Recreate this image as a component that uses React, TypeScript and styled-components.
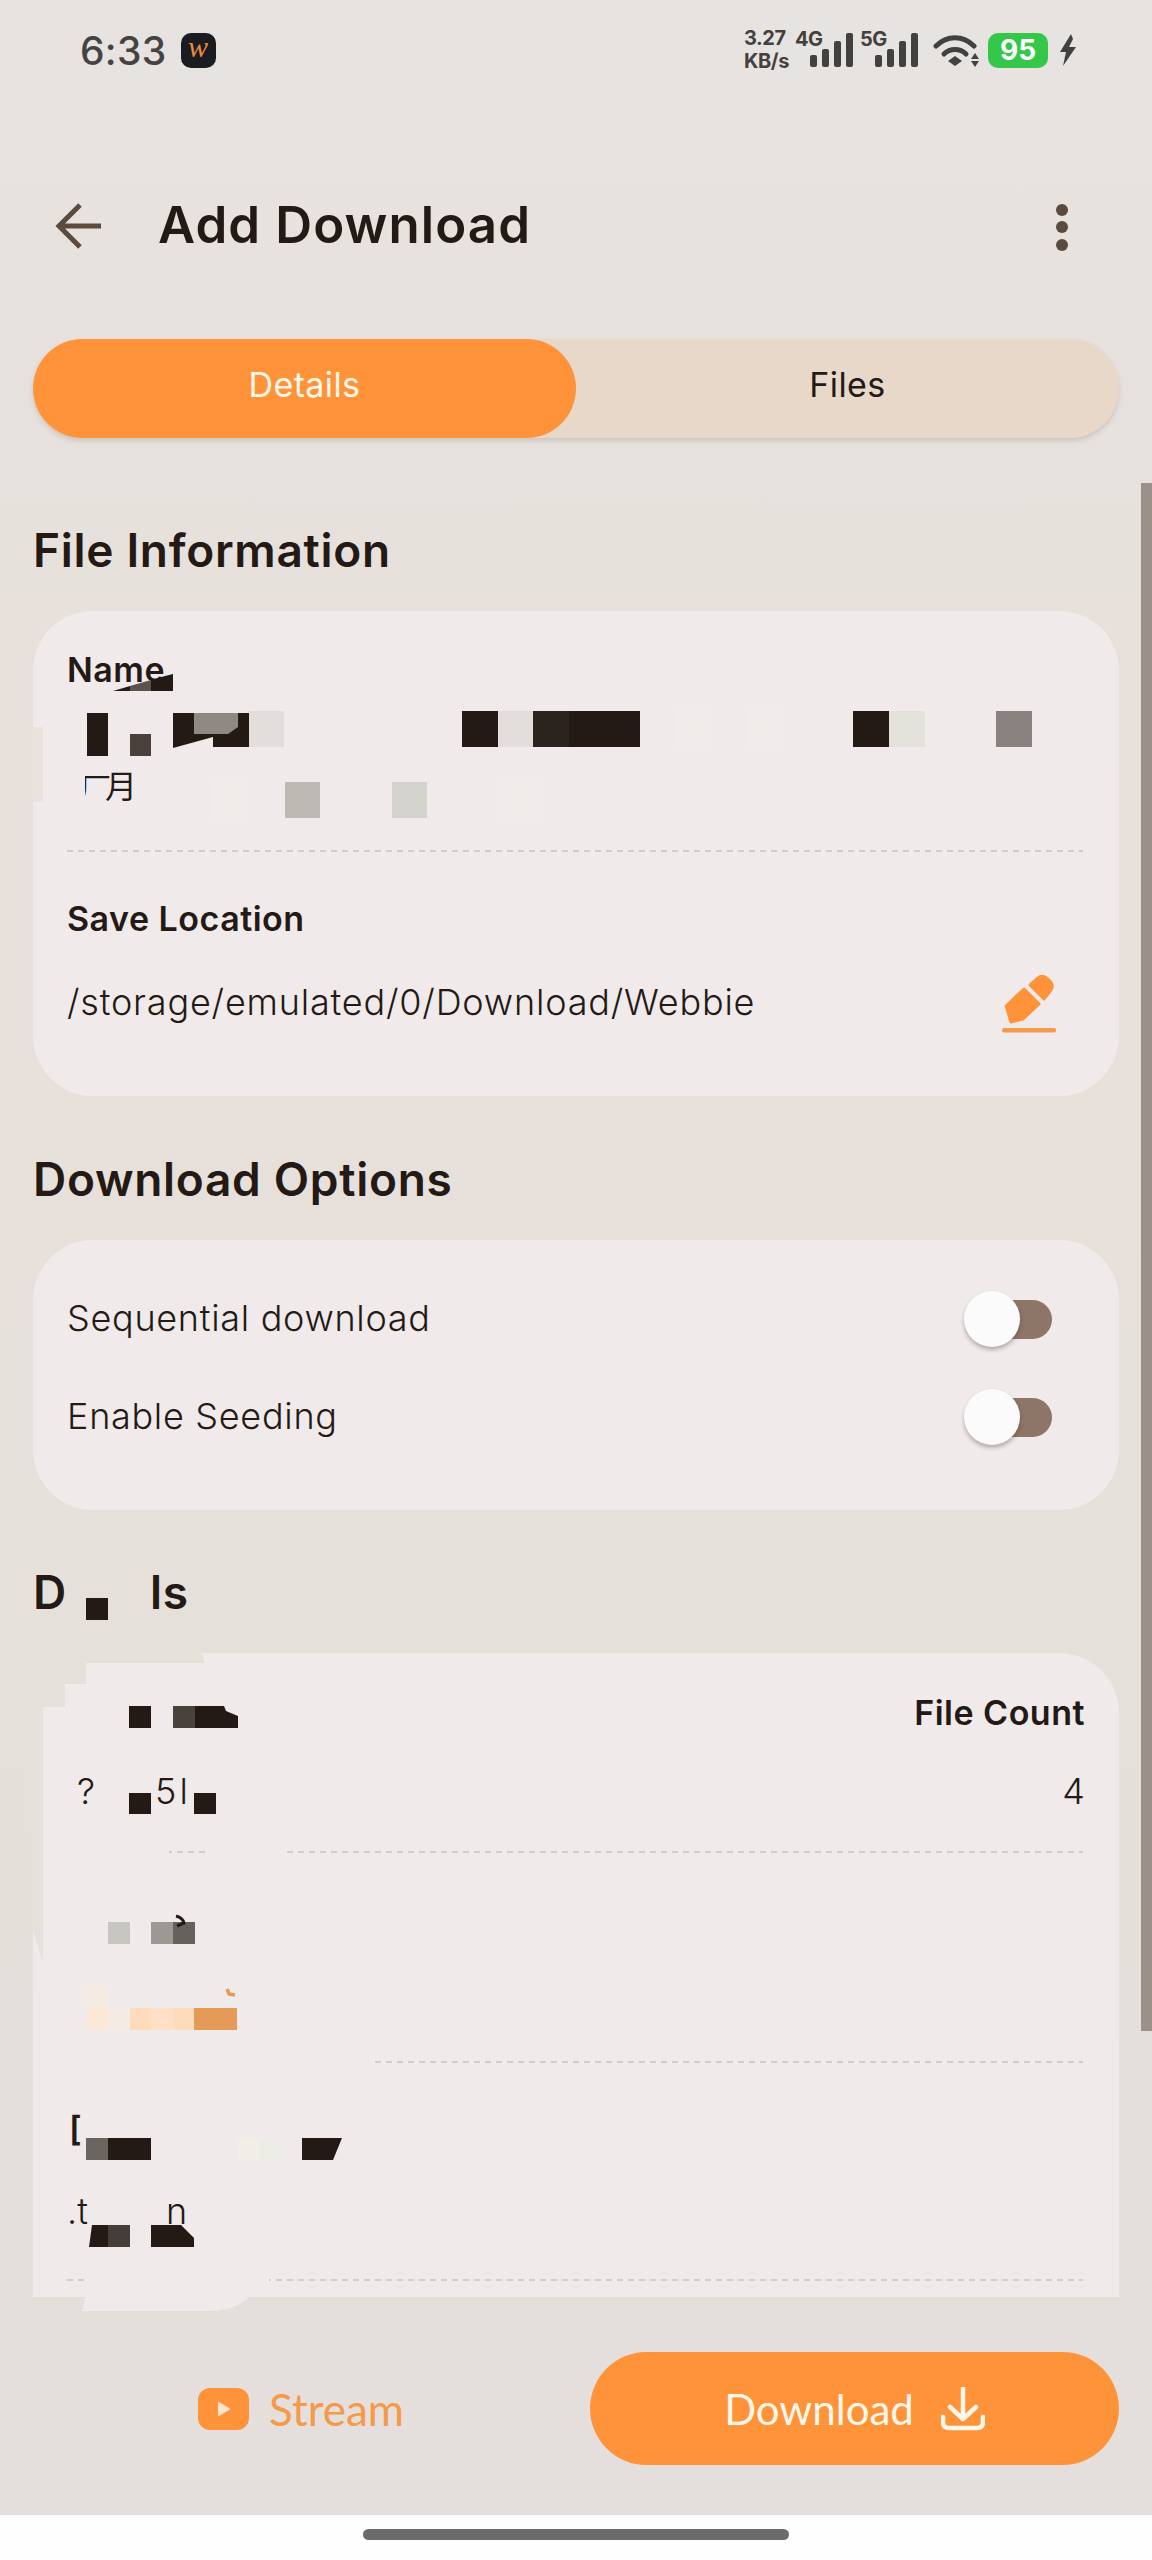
import React from "react";
import styled, { createGlobalStyle } from "styled-components";

const INK = "#231a15";
const ORANGE = "#ff9339";
const CARD = "#f0ebea";
const BROWN = "#5b4a3e";
const FONT = `Inter, "Noto Sans CJK SC", sans-serif`;

const Global = createGlobalStyle`
  html, body { margin: 0; padding: 0; background: #fff; }
  * { box-sizing: border-box; }
`;

const Page = styled.div`
  position: relative;
  width: 1152px;
  height: 2560px;
  overflow: hidden;
  display: flex;
  flex-direction: column;
  font-family: ${FONT};
  color: ${INK};
  background: linear-gradient(180deg, #e7e3e0 0%, #e7e0db 30%, #e6e0da 60%, #e4dfdc 100%);
`;

const StatusBar = styled.div`
  height: 100px;
  flex: none;
  padding: 0 76px 0 80px;
  display: flex;
  align-items: center;
  justify-content: space-between;
`;
const StatusLeft = styled.div`
  display: flex;
  align-items: center;
  gap: 14px;
`;
const Clock = styled.span`
  font-size: 39px;
  font-weight: 500;
  letter-spacing: 0.3px;
  color: #454341;
`;
const AppIcon = styled.div`
  width: 35px;
  height: 35px;
  border-radius: 10px;
  background: #1b1c22;
  display: flex;
  align-items: center;
  justify-content: center;
  font-family: "Liberation Serif", serif;
  font-style: italic;
  font-size: 30px;
  line-height: 1;
  color: #e98b3c;
  padding-bottom: 6px;
`;
const StatusRight = styled.div`
  display: flex;
  align-items: center;
  color: #434140;
`;
const Speed = styled.div`
  font-size: 20px;
  font-weight: 700;
  line-height: 23px;
  width: 51px;
  letter-spacing: -0.4px;
  white-space: nowrap;
`;
const Signal = styled.div`
  display: flex;
  align-items: flex-start;
  height: 34px;
  width: 65px;
  position: relative;
`;
const NetLabel = styled.span`
  font-size: 20px;
  font-weight: 700;
  line-height: 20px;
  letter-spacing: -0.5px;
  width: 30px;
  margin-top: -4px;
`;
const Battery = styled.div`
  width: 60px;
  height: 35px;
  margin-left: 9px;
  border-radius: 10px;
  background: #34c749;
  color: #fff;
  font-size: 28px;
  font-weight: 700;
  display: flex;
  align-items: center;
  justify-content: center;
`;

const AppBar = styled.header`
  height: 100px;
  flex: none;
  margin-top: 76px;
  padding: 0 83px 0 55px;
  display: flex;
  align-items: center;
`;
const Title = styled.h1`
  margin: -3px 0 0 53px;
  flex: 1;
  font-size: 51px;
  font-weight: 600;
  letter-spacing: 1.1px;
`;
const KebabSlot = styled.div`
  display: flex;
  margin-top: 4px;
`;

const Tabs = styled.div`
  flex: none;
  margin: 63px 33px 0;
  height: 99px;
  border-radius: 50px;
  background: #e8d8ca;
  box-shadow: 0 3px 5px rgba(90, 70, 50, 0.18);
  display: grid;
  grid-template-columns: 543px 1fr;
`;
const Tab = styled.div<{ $active?: boolean }>`
  display: flex;
  align-items: center;
  justify-content: center;
  padding-bottom: 8px;
  border-radius: 50px;
  font-size: 34px;
  letter-spacing: 0.4px;
  font-weight: 400;
  background: ${(p) => (p.$active ? ORANGE : "transparent")};
  color: ${(p) => (p.$active ? "#fff7ea" : INK)};
`;

const Scroll = styled.main`
  flex: none;
  height: 1859px;
  overflow: hidden;
  padding: 0 33px;
`;
const SectionTitle = styled.h2<{ $top: number }>`
  margin: ${(p) => p.$top}px 0 30px;
  height: 60px;
  line-height: 58px;
  font-size: 46px;
  font-weight: 600;
  letter-spacing: 0.7px;
`;
const Card = styled.section`
  background: ${CARD};
  border-radius: 60px;
  padding: 0 34px;
`;
const InfoCard = styled(Card)`
  padding-top: 37px;
  padding-bottom: 63px;
`;
const OptionsCard = styled(Card)`
  padding-top: 30px;
  padding-bottom: 44px;
  padding-right: 67px;
`;
const DetailsCard = styled(Card)`
  padding-top: 38px;
  height: 900px;
`;
const Label = styled.div<{ $top?: number }>`
  height: 44px;
  line-height: 44px;
  margin-top: ${(p) => p.$top ?? 0}px;
  font-size: 34px;
  font-weight: 600;
  letter-spacing: 0.5px;
`;
const NameValue = styled.div`
  margin-top: 13px;
  height: 106px;
  padding: 53px 0 0 12px;
  font-size: 32px;
  line-height: 53px;
  letter-spacing: -6px;
  font-family: "Noto Sans CJK SC", sans-serif;
`;
const Divider = styled.div<{ $top: number }>`
  height: 2px;
  margin: ${(p) => p.$top}px 2px 0 0;
  background: repeating-linear-gradient(90deg, #d3ccc7 0 6px, transparent 6px 11px);
`;
const PathRow = styled.div`
  margin-top: 32px;
  height: 60px;
  display: flex;
  align-items: center;
  justify-content: space-between;
  padding-right: 25px;
`;
const PathText = styled.span`
  font-size: 36px;
  letter-spacing: 0.8px;
  font-weight: 300;
  margin-top: -3px;
`;
const OptionRow = styled.div`
  height: 98px;
  display: flex;
  align-items: center;
  justify-content: space-between;
`;
const OptionText = styled.span`
  font-size: 36px;
  font-weight: 300;
  letter-spacing: 0.7px;
  margin-top: -2px;
`;
const Switch = styled.div`
  position: relative;
  width: 88px;
  height: 39px;
`;
const SwitchTrack = styled.div`
  margin-left: 20px;
  height: 39px;
  border-radius: 0 20px 20px 0;
  background: #8d7568;
`;
const SwitchThumb = styled.div`
  position: absolute;
  left: 0;
  top: -9px;
  width: 56px;
  height: 56px;
  border-radius: 50%;
  background: #fbfbfb;
  box-shadow: 0 3px 4px rgba(60, 40, 30, 0.32);
`;
const InfoRow = styled.div`
  display: flex;
  justify-content: space-between;
`;
const ValueRow = styled.div<{ $top: number }>`
  display: flex;
  justify-content: space-between;
  align-items: center;
  height: 50px;
  margin-top: ${(p) => p.$top}px;
  font-size: 36px;
  font-weight: 300;
`;
const Frag = styled.span<{ $left: number; $strong?: boolean }>`
  margin-left: ${(p) => p.$left}px;
  font-weight: ${(p) => (p.$strong ? 600 : 300)};
  white-space: pre;
`;
const Frags = styled.div`
  display: flex;
  align-items: center;
`;

const Footer = styled.footer`
  flex: none;
  height: 218px;
  padding: 55px 33px 0 198px;
  display: flex;
  align-items: flex-start;
  justify-content: space-between;
`;
const StreamButton = styled.div`
  height: 113px;
  display: flex;
  align-items: center;
  gap: 20px;
  font-family: Lato, sans-serif;
  font-size: 44px;
  color: #f49a4a;
`;
const StreamIcon = styled.div`
  width: 51px;
  height: 42px;
  border-radius: 12px;
  background: ${ORANGE};
  display: flex;
  align-items: center;
  justify-content: center;
`;
const DownloadButton = styled.div`
  width: 529px;
  height: 113px;
  border-radius: 57px;
  background: ${ORANGE};
  color: #fff7ea;
  display: flex;
  align-items: center;
  justify-content: center;
  gap: 27px;
  font-family: Lato, sans-serif;
  font-size: 42px;
`;
const NavBar = styled.div`
  flex: 1;
  background: #fefefe;
  display: flex;
  justify-content: center;
  padding-top: 14px;
`;
const NavPill = styled.div`
  width: 426px;
  height: 11px;
  border-radius: 6px;
  background: #6b6b6b;
`;
const ScrollThumb = styled.div`
  position: absolute;
  right: 0;
  top: 483px;
  width: 11px;
  height: 1548px;
  background: #9b918a;
`;
const RedactionLayer = styled.svg`
  position: absolute;
  left: 0;
  top: 0;
  pointer-events: none;
`;

const Bars = () => (
  <svg width="44" height="34" viewBox="0 0 44 34" style={{ marginLeft: -15 }}>
    <g fill="#434140">
      <rect x="0" y="22" width="7" height="12" rx="2" />
      <rect x="12" y="16" width="7" height="18" rx="2" />
      <rect x="24" y="8" width="7" height="26" rx="2" />
      <rect x="36" y="0" width="7" height="34" rx="2" />
    </g>
  </svg>
);

const Wifi = () => (
  <svg width="46" height="33" viewBox="0 0 46 33" style={{ marginLeft: 8 }}>
    <g fill="none" stroke="#434140" strokeWidth="5" strokeLinecap="round">
      <path d="M3 12C14 1 30 1 41 12" />
      <path d="M11 20C17 14 27 14 33 20" />
    </g>
    <path d="M15 27L22 22L29 27L22 32Z" fill="#434140" />
    <path d="M42 19L46 25H38ZM42 33L38 27H46Z" fill="#434140" />
  </svg>
);

const Bolt = () => (
  <svg width="16" height="32" viewBox="0 0 16 32" style={{ marginLeft: 12 }}>
    <path d="M11 0L0 18H6L3 32L16 13H9L13 5Z" fill="#434140" />
  </svg>
);

const BackArrow = () => (
  <svg width="50" height="50" viewBox="0 0 50 50">
    <path d="M3 25H46M25 4L4 25L25 46" fill="none" stroke={BROWN} strokeWidth="5" />
  </svg>
);

const Kebab = () => (
  <svg width="14" height="48" viewBox="0 0 14 48">
    <g fill={BROWN}>
      <circle cx="7" cy="6" r="6" />
      <circle cx="7" cy="23" r="6" />
      <circle cx="7" cy="41" r="6" />
    </g>
  </svg>
);

const Pen = () => (
  <svg width="60" height="60" viewBox="0 0 60 60">
    <g fill={ORANGE} stroke={ORANGE} strokeLinejoin="round" strokeWidth="3">
      <path d="M6 33L24 16L39 31L23 46L11 49Z" />
      <path d="M30 12L38 5Q41 2 45 4L50 8Q54 13 51 17L44 26Z" />
    </g>
    <rect x="2" y="55" width="54" height="4.5" rx="2" fill="#f59a4c" />
  </svg>
);

const PlayGlyph = () => (
  <svg width="14" height="16" viewBox="0 0 14 16">
    <path d="M2 2L12 8L2 14Z" fill="#fbe3cd" stroke="#fbe3cd" strokeWidth="2" strokeLinejoin="round" />
  </svg>
);

const DownloadGlyph = () => (
  <svg width="44" height="44" viewBox="0 0 44 44">
    <path
      d="M22 1V31M9 20L22 32L35 20M2 30V35Q2 41 8 41H36Q42 41 42 35V30"
      fill="none"
      stroke="#fff7ea"
      strokeWidth="4.5"
      strokeLinecap="round"
      strokeLinejoin="round"
    />
  </svg>
);

const DARK = "#231a15";
const FAINT = "#f0ecea";
const cells: [number, number, number, number, string][] = [
  // name, line one
  [87, 713, 21, 43, DARK],
  [130, 734, 21, 22, "#4a403c"],
  [249, 711, 35, 36, "#e3dedc"],
  [462, 711, 36, 36, DARK],
  [498, 711, 35, 36, "#e3dedc"],
  [533, 711, 36, 36, "#2a231e"],
  [569, 711, 71, 36, DARK],
  [676, 711, 36, 36, FAINT],
  [748, 711, 30, 36, FAINT],
  [853, 711, 36, 36, DARK],
  [889, 711, 36, 36, "#e2e1da"],
  [996, 711, 36, 36, "#8a827f"],
  // name, line two
  [212, 782, 36, 36, FAINT],
  [285, 782, 35, 36, "#bdbab4"],
  [392, 782, 35, 36, "#d4d2cd"],
  [501, 782, 36, 36, FAINT],
  // details heading
  [86, 1598, 22, 22, DARK],
  // details, first row
  [129, 1706, 22, 22, DARK],
  [173, 1706, 22, 22, "#47423c"],
  [129, 1793, 22, 21, DARK],
  [194, 1793, 22, 21, DARK],
  // details, second row
  [108, 1922, 22, 22, "#c8c6c1"],
  [151, 1922, 22, 22, "#9c9894"],
  [173, 1922, 22, 22, "#65615b"],
  [87, 1987, 21, 21, "#f5ebe3"],
  [87, 2008, 21, 22, "#fde8d8"],
  [108, 2008, 22, 22, "#f4ebe4"],
  [130, 2008, 21, 22, "#fedcbb"],
  [151, 2008, 22, 22, "#fee0c6"],
  [173, 2008, 21, 22, "#fedcbb"],
  [194, 2008, 43, 22, "#e69a57"],
  // details, third row
  [86, 2138, 22, 22, "#6b655f"],
  [108, 2138, 43, 22, DARK],
  [238, 2138, 22, 22, "#f1eee8"],
  [260, 2138, 22, 22, "#ecebe6"],
  [108, 2225, 22, 22, "#443d38"],
];
const polys: [string, string][] = [
  // name label
  ["113,691 130,691 130,686", DARK],
  ["130,691 151,691 151,680 130,686", "#5b524e"],
  ["151,691 173,691 173,674 165,676 151,680", DARK],
  // name, line one
  ["173,713 249,713 249,747 213,747 213,737 173,748", DARK],
  ["194,713 238,713 238,727 228,734 194,734", "#8f8985"],
  // details
  ["195,1706 224,1706 226,1711 238,1716 238,1728 195,1728", DARK],
  ["302,2138 342,2138 333,2160 302,2160", DARK],
  ["92,2225 108,2225 108,2247 89,2247", DARK],
  ["151,2225 181,2225 194,2238 194,2247 151,2247", DARK],
];

const Redactions = () => (
  <RedactionLayer width="1152" height="2560" viewBox="0 0 1152 2560">
    {/* background showing through the top-left of the details card */}
    <path
      d="M30 1650H200L205 1663H86V1684H65V1707H43V1963L33 1930V1990H30Z"
      fill="#e6e0db"
    />
    {/* card colour spilling past the clipped list */}
    <path d="M86 2296H250Q235 2311 210 2311H82Z" fill={CARD} />
    {/* patches over the partly hidden text and the dashed rules */}
    <rect x="33" y="727" width="10" height="75" fill="#e9e2dd" />
    <rect x="66" y="760" width="19" height="44" fill={CARD} />
    <rect x="85" y="760" width="23" height="16" fill={CARD} />
    <rect x="66" y="1850" width="103" height="5" fill={CARD} />
    <rect x="208" y="1850" width="75" height="5" fill={CARD} />
    <rect x="66" y="2060" width="304" height="5" fill={CARD} />
    <rect x="85" y="2278" width="184" height="5" fill={CARD} />
    {cells.map(([x, y, w, h, c]) => (
      <rect key={`${x}-${y}`} x={x} y={y} width={w} height={h} fill={c} shapeRendering="crispEdges" />
    ))}
    {polys.map(([p, c]) => (
      <polygon key={p} points={p} fill={c} />
    ))}
    <path d="M176 1916Q183 1918 184 1923L177 1926" fill="none" stroke={DARK} strokeWidth="3" />
    <path d="M227 1989L229 1994L235 1995" fill="none" stroke="#e69a57" strokeWidth="3.5" />
  </RedactionLayer>
);

export default function App() {
  return (
    <Page>
      <Global />
      <StatusBar>
        <StatusLeft>
          <Clock>6:33</Clock>
          <AppIcon>w</AppIcon>
        </StatusLeft>
        <StatusRight>
          <Speed>
            3.27
            <br />
            KB/s
          </Speed>
          <Signal>
            <NetLabel>4G</NetLabel>
            <Bars />
          </Signal>
          <Signal>
            <NetLabel>5G</NetLabel>
            <Bars />
          </Signal>
          <Wifi />
          <Battery>95</Battery>
          <Bolt />
        </StatusRight>
      </StatusBar>

      <AppBar>
        <BackArrow />
        <Title>Add Download</Title>
        <KebabSlot>
          <Kebab />
        </KebabSlot>
      </AppBar>

      <Tabs>
        <Tab $active>Details</Tab>
        <Tab>Files</Tab>
      </Tabs>

      <Scroll>
        <SectionTitle $top={83}>File Information</SectionTitle>
        <InfoCard>
          <Label>Name</Label>
          <NameValue>广月</NameValue>
          <Divider $top={39} />
          <Label $top={45}>Save Location</Label>
          <PathRow>
            <PathText>/storage/emulated/0/Download/Webbie</PathText>
            <Pen />
          </PathRow>
        </InfoCard>

        <SectionTitle $top={54}>Download Options</SectionTitle>
        <OptionsCard>
          <OptionRow>
            <OptionText>Sequential download</OptionText>
            <Switch>
              <SwitchTrack />
              <SwitchThumb />
            </Switch>
          </OptionRow>
          <OptionRow>
            <OptionText>Enable Seeding</OptionText>
            <Switch>
              <SwitchTrack />
              <SwitchThumb />
            </Switch>
          </OptionRow>
        </OptionsCard>

        <SectionTitle $top={53}>
          D<Frag $left={83} $strong>ls</Frag>
        </SectionTitle>
        <DetailsCard>
          <InfoRow>
            <span />
            <Label>File Count</Label>
          </InfoRow>
          <ValueRow $top={31}>
            <Frags>
              <Frag $left={10}>?</Frag>
              <Frag $left={60}>5</Frag>
              <Frag $left={3}>l</Frag>
            </Frags>
            <span>4</span>
          </ValueRow>
          <Divider $top={35} />
          <Label $top={60}>&nbsp;</Label>
          <ValueRow $top={40}>&nbsp;</ValueRow>
          <Divider $top={14} />
          <Label $top={44}>
            <Frag $left={2} $strong>[</Frag>
          </Label>
          <ValueRow $top={35}>
            <Frags>
              <Frag $left={0}>.t</Frag>
              <Frag $left={78}>n</Frag>
            </Frags>
          </ValueRow>
          <Divider $top={43} />
        </DetailsCard>
      </Scroll>

      <Footer>
        <StreamButton>
          <StreamIcon>
            <PlayGlyph />
          </StreamIcon>
          Stream
        </StreamButton>
        <DownloadButton>
          Download
          <DownloadGlyph />
        </DownloadButton>
      </Footer>
      <NavBar>
        <NavPill />
      </NavBar>

      <ScrollThumb />
      <Redactions />
    </Page>
  );
}
